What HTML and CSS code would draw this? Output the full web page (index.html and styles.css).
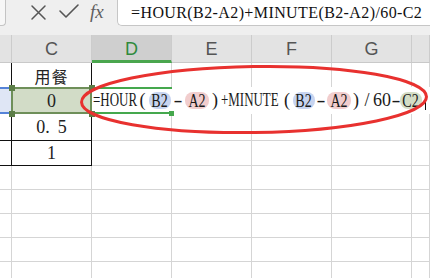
FILE: index.html
```html
<!DOCTYPE html>
<html>
<head>
<meta charset="utf-8">
<link rel="stylesheet" href="styles.css">
</head>
<body>
<div class="app">
  <div class="topbar">
    <div class="namebox"></div>
    <svg class="ico ico-x" width="18" height="18" viewBox="0 0 18 18"><path d="M2 2 L15 15 M15 2 L2 15" /></svg>
    <svg class="ico ico-ok" width="22" height="18" viewBox="0 0 22 18"><path d="M2 8 L8 14 L20 2" /></svg>
    <span class="fx">fx</span>
    <div class="formula">=HOUR(B2-A2)+MINUTE(B2-A2)/60-C2</div>
  </div>

  <div class="grid">
    <div class="hd"></div><div class="hd">C</div><div class="hd active">D</div><div class="hd">E</div><div class="hd">F</div><div class="hd">G</div><div class="hd"></div>

    <div class="c ka"></div><div class="c kc cj">用餐</div><div class="c"></div><div class="c"></div><div class="c"></div><div class="c"></div><div class="c"></div>

    <div class="c ka refb"></div>
    <div class="c kc num sel">0<i class="hdl tl"></i><i class="hdl tr"></i><i class="hdl bl"></i><i class="hdl br"></i></div>
    <div class="c edit-cell">
      <div class="editor"><span class="t w43"><span class="sx">=HOUR</span></span><span class="p w13">(</span><span class="pill pb w22"><span class="sx">B2</span></span><span class="p w14"><span class="dash">-</span></span><span class="pill pa w24"><span class="sx">A2</span></span><span class="p w12">)</span><span class="t w60"><span class="sx">+MINUTE</span></span><span class="p w12">(</span><span class="pill pb w22"><span class="sx">B2</span></span><span class="p w12"><span class="dash">-</span></span><span class="pill pa w24"><span class="sx">A2</span></span><span class="p w10">)</span><span class="p w12">/</span><span class="p w18">60</span><span class="p w9"><span class="dash">-</span></span><span class="pill pc w22"><span class="sx">C2</span></span><span class="caret"></span><i class="ehdl"></i></div>
    </div>
    <div class="c"></div><div class="c"></div><div class="c"></div><div class="c"></div>

    <div class="c ka kb"></div><div class="c kc kb num">0.<span class="gap">5</span></div><div class="c"></div><div class="c"></div><div class="c"></div><div class="c"></div><div class="c"></div>

    <div class="c ka kb"></div><div class="c kc kb num">1</div><div class="c"></div><div class="c"></div><div class="c"></div><div class="c"></div><div class="c"></div>

    <div class="c"></div><div class="c"></div><div class="c"></div><div class="c"></div><div class="c"></div><div class="c"></div><div class="c"></div>
    <div class="c"></div><div class="c"></div><div class="c"></div><div class="c"></div><div class="c"></div><div class="c"></div><div class="c"></div>
    <div class="c"></div><div class="c"></div><div class="c"></div><div class="c"></div><div class="c"></div><div class="c"></div><div class="c"></div>
    <div class="c"></div><div class="c"></div><div class="c"></div><div class="c"></div><div class="c"></div><div class="c"></div><div class="c"></div>
    <div class="c"></div><div class="c"></div><div class="c"></div><div class="c"></div><div class="c"></div><div class="c"></div><div class="c"></div>
  </div>

  <svg class="ring" width="430" height="278" viewBox="0 0 430 278">
    <ellipse cx="254" cy="99.5" rx="172.5" ry="33" transform="rotate(-0.9 254 99.5)" />
  </svg>
</div>
</body>
</html>
```

FILE: styles.css
```css
* { box-sizing: border-box; }
html, body { margin: 0; padding: 0; background: #ffffff; }
body { width: 430px; height: 278px; overflow: hidden; }

.app { position: relative; width: 430px; height: 278px; overflow: hidden; }

.topbar {
  display: flex;
  align-items: flex-start;
  height: 35px;
  background: #efefef;
}
.namebox {
  width: 6px;
  height: 26px;
  background: #f7f7f7;
  border-right: 1px solid #c4c4c4;
  border-bottom: 1px solid #c4c4c4;
  border-bottom-right-radius: 4px;
}
.ico { fill: none; stroke: #555; stroke-width: 1.5; stroke-linecap: round; stroke-linejoin: round; }
.ico-x { margin: 4px 0 0 24px; }
.ico-ok { margin: 3px 0 0 10px; stroke-width: 1.6; }
.fx {
  margin: 0 0 0 10px;
  width: 20px;
  font-family: "Liberation Serif", serif;
  font-style: italic;
  font-size: 19px;
  line-height: 24px;
  color: #5f5f5f;
}
.formula {
  margin-left: 7px;
  margin-top: -6px;
  flex: 1;
  height: 32px;
  padding: 6px 0 0 13px;
  background: #ffffff;
  border: 1px solid #c6c6c6;
  border-right: none;
  border-radius: 0 0 0 5px;
  font-family: "Liberation Serif", serif;
  font-size: 16px;
  letter-spacing: 0.4px;
  line-height: 24px;
  color: #111;
  white-space: nowrap;
}

.grid {
  display: grid;
  grid-template-columns: 12px repeat(5, 80px) 1fr;
  grid-template-rows: 28px 25px 26px 27px 25px repeat(5, 24px);
}
.hd {
  background: #e3e3e3;
  border-right: 1px solid #cccccc;
  border-bottom: 1px solid #c9c9c9;
  font-family: "Liberation Sans", sans-serif;
  font-size: 18px;
  color: #555;
  display: flex;
  align-items: center;
  justify-content: center;
  padding-top: 1px;
}
.hd.active {
  background: #cfcfcf;
  color: #2f8a3c;
  border-bottom: 3px solid #4aa64e;
  padding-top: 3px;
}
.c {
  border-right: 1px solid #d5d5d5;
  border-bottom: 1px solid #d5d5d5;
  display: flex;
  align-items: center;
  justify-content: center;
  font-family: "Liberation Serif", serif;
  font-size: 18px;
  color: #222;
}
.ka { border-right-color: #111; }
.kc { border-right-color: #111; }
.kb { border-bottom-color: #111; }
.cj { font-family: "Noto Sans CJK SC", sans-serif; font-size: 16px; letter-spacing: 1px; padding-top: 1px; }
.num { padding-top: 1px; }
.gap { margin-left: 8px; }

.refb { position: relative; background: #dfe6f5; }
.refb::before {
  content: "";
  position: absolute;
  left: 0; right: 0; top: -1px; bottom: -1px;
  border-top: 2px solid #5583d8;
  border-bottom: 2px solid #5583d8;
}

.sel { position: relative; background: #d2dcc7; }
.sel::before {
  content: "";
  position: absolute;
  left: -1px; right: -1px; top: -1px; bottom: -1px;
  border: 2px solid #6e8f59;
}
.hdl {
  position: absolute;
  width: 6px; height: 6px;
  background: #5c7e48;
  z-index: 3;
}
.tl { left: -3px; top: -3px; }
.tr { right: -4px; top: -3px; }
.bl { left: -3px; bottom: -4px; }
.br { right: -4px; bottom: -4px; }

.edit-cell { position: relative; z-index: 2; }
.editor {
  position: absolute;
  left: 0; top: -1px;
  width: 338px; height: 27px;
  background: #ffffff;
  display: flex;
  align-items: center;
  padding-left: 1px;
  font-family: "Liberation Serif", serif;
  font-size: 18px;
  color: #1a1a1a;
  white-space: nowrap;
}
.editor::before, .editor::after {
  content: "";
  position: absolute;
  left: 0;
  width: 80px;
  height: 2px;
  background: #45a84d;
}
.editor::before { top: 0; }
.editor::after { bottom: 0; }
.ehdl {
  position: absolute;
  left: 77px; bottom: -2px;
  width: 5px; height: 5px;
  background: #45a84d;
}
.t { display: inline-block; overflow: visible; }
.t .sx { display: inline-block; transform: scaleX(0.72); transform-origin: 0 50%; }
.p { display: inline-block; text-align: center; }
.dash { display: inline-block; transform: scaleX(1.5); }
.w9 { width: 9px; }
.w10 { width: 10px; }
.w12 { width: 12px; }
.w13 { width: 13px; }
.w14 { width: 14px; }
.w18 { width: 18px; }
.w22 { width: 22px; }
.w24 { width: 24px; }
.w43 { width: 43px; }
.w60 { width: 60px; }
.pill {
  display: inline-flex;
  justify-content: center;
  align-items: center;
  height: 17px;
  border-radius: 8px;
  line-height: 18px;
  padding-top: 1px;
}
.pill .sx { display: inline-block; transform: scaleX(0.78); transform-origin: 50% 50%; }
.pb { background: #c7d4f0; }
.pa { background: #f1cdcd; }
.pc { background: #d4ddc6; }
.caret { display: inline-block; width: 1px; height: 18px; background: #111; margin-left: 3px; }

.ring {
  position: absolute;
  left: 0; top: 0;
  pointer-events: none;
  z-index: 5;
}
.ring ellipse { fill: none; stroke: #e8312f; stroke-width: 3; }
```
